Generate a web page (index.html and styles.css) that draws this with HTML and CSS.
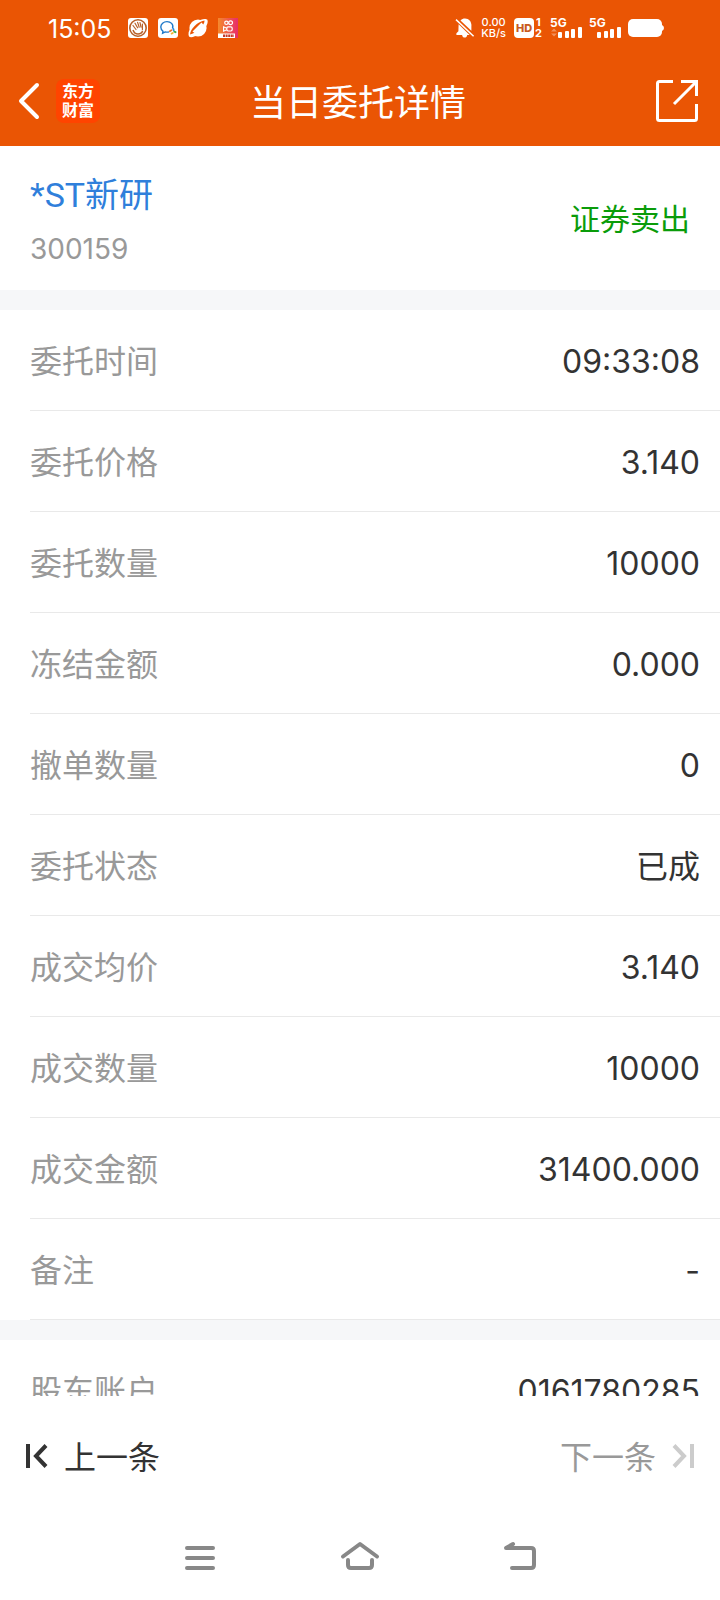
FILE: index.html
```html
<!DOCTYPE html>
<html lang="zh-CN">
<head>
<meta charset="utf-8">
<meta name="viewport" content="width=device-width, initial-scale=1">
<title>当日委托详情</title>
<link rel="stylesheet" href="styles.css">
</head>
<body>
<div class="screen">
  <header class="top">
    <div class="status">
      <div class="status-left">
        <time class="clock">15:05</time>
        <svg class="app-icon" viewBox="0 0 20 20">
          <rect width="20" height="20" rx="3" fill="#fff"/>
          <circle cx="10" cy="10" r="8.2" fill="none" stroke="#b8602a" stroke-width="1.6"/>
          <path d="M5 7.5l3 4M7 5.2l2.6 4.6M9.6 4.4l1.6 4.8M12 4.6l1 4.6M14.4 6v5.5" stroke="#b8602a" stroke-width="1.2" stroke-linecap="round" fill="none"/>
          <path d="M5 12c1 2.800 3 4 5 4s4-1 4.600-3.200" stroke="#b8602a" stroke-width="1.500" fill="none"/>
        </svg>
        <svg class="app-icon" viewBox="0 0 20 20">
          <rect width="20" height="20" rx="3" fill="#fff"/>
          <path d="M14.500 10.500C16 6 12.500 3.600 9 3.600S2.800 6 2.800 9c0 2 .9 3.200 2.200 4.200L4.600 15.200l2.600-1.300c1.200.3 2.500.3 3.800 0" fill="none" stroke="#1f78c8" stroke-width="1.400"/>
          <path d="M11.800 13.200l1.600-1" stroke="#e8752e" stroke-width="1.800" stroke-linecap="round"/>
          <path d="M15.300 10.800l.4 1.400" stroke="#2a8fe0" stroke-width="1.800" stroke-linecap="round"/>
          <path d="M16.200 13.600l1.400.6" stroke="#3fae49" stroke-width="1.800" stroke-linecap="round"/>
          <path d="M13.600 15.600l1.200-.6" stroke="#f2b632" stroke-width="1.800" stroke-linecap="round"/>
        </svg>
        <svg class="app-icon" viewBox="0 0 20 20">
          <circle cx="10" cy="10" r="8.600" fill="#fff"/>
          <path d="M1 18.600C-1 14 3 8 9 3.600 13 .8 18 .2 19.400 1.800 21 6 16 12 11 15.800 7 18.800 3 20 1 18.600z" fill="#fff"/>
          <path d="M2 16.500C2.500 11 9 4 16.500 2.600 17 6.500 9.500 15 2 16.500z" fill="#ea5504"/>
          <path d="M4.500 13.500L13.500 4.500 17 8.500 8.500 16.500z" fill="#fff"/>
        </svg>
        <svg class="app-icon" viewBox="0 0 20 20">
          <defs><linearGradient id="cam" x1="0" x2="1"><stop offset="0" stop-color="#f58a2c"/><stop offset="1" stop-color="#e82c6a"/></linearGradient></defs>
          <rect width="20" height="20" fill="url(#cam)"/>
          <g fill="none" stroke="#fff" stroke-width="1.200"><circle cx="8.400" cy="4.800" r="1.700"/><circle cx="12.600" cy="4.800" r="1.900"/><rect x="8.800" y="8.800" width="5.400" height="4.200" rx="1.400"/><path d="M8.800 10.200L5.600 8.800v4.400l3.200-1.400"/></g>
          <rect y="15.500" width="17" height="4.500" fill="#fff"/>
          <path d="M5 17.800h11" stroke="#c43a28" stroke-width="2.400" stroke-dasharray="2 .6"/>
        </svg>
      </div>
      <div class="status-right">
        <svg class="bell" viewBox="0 0 20 20" fill="#fff">
          <path d="M5.500 2.600C7 .8 8 .4 10 .4c4 0 6.400 3 6.400 7v5.300z"/>
          <path d="M3.600 6.200L14.600 17H12.200c-.3 1.800-1.200 2.600-2.500 2.600S7.400 18.800 7.100 17H1.400v-1.700l2-2z"/>
          <path d="M1 1.600l17.600 16.600" stroke="#fff" stroke-width="1.500"/>
        </svg>
        <div class="speed"><span>0.00</span><span>KB/s</span></div>
        <svg class="hd" viewBox="0 0 30 20">
          <rect width="20" height="20" rx="4" fill="#fff"/>
          <text class="hd-text" x="10" y="14">HD</text>
          <text class="sim-text" x="22" y="8">1</text>
          <text class="sim-text" x="21" y="19">2</text>
        </svg>
        <svg class="signal" viewBox="0 0 33 20" fill="#fff">
          <text class="sig-text" x="0" y="9">5G</text>
          <path d="M1 13.500l3-3 3 3zM1 15.500l3 3 3-3z" opacity=".35"/>
          <rect x="8" y="14" width="4" height="6" rx="1"/><rect x="15" y="13" width="4" height="7" rx="1"/><rect x="21" y="11" width="4" height="9" rx="1"/><rect x="28" y="9" width="4" height="11" rx="1"/>
        </svg>
        <svg class="signal" viewBox="0 0 33 20" fill="#fff">
          <text class="sig-text" x="0" y="9">5G</text>
          <rect x="8" y="14" width="4" height="6" rx="1"/><rect x="15" y="13" width="4" height="7" rx="1"/><rect x="21" y="11" width="4" height="9" rx="1"/><rect x="28" y="9" width="4" height="11" rx="1"/>
        </svg>
        <svg class="battery" viewBox="0 0 36 20" fill="#fff"><rect y="1" width="34" height="18" rx="5"/><path d="M34 7q2 1 2 3t-2 3z"/></svg>
      </div>
    </div>
    <div class="titlebar">
      <div class="title-left">
        <button class="icon-btn" aria-label="返回">
          <svg width="22" height="36" viewBox="0 0 22 36" fill="none" stroke="#fff" stroke-width="4" stroke-linecap="round" stroke-linejoin="round"><path d="M19 2L3 18l16 16"/></svg>
        </button>
        <div class="logo"><span>东方</span><span>财富</span></div>
      </div>
      <h1 class="title">当日委托详情</h1>
      <button class="icon-btn share" aria-label="分享">
        <svg width="42" height="42" viewBox="0 0 42 42" fill="none" stroke="#fff" stroke-width="3"><path d="M17 1.500H3.500q-2 0-2 2v35q0 2 2 2h35q2 0 2-2V24M25 1.500h15.500V16M40 2L18 24"/></svg>
      </button>
    </div>
  </header>

  <main class="content">
    <section class="stock">
      <div>
        <a class="stock-name" href="#">*ST新研</a>
        <div class="stock-code">300159</div>
      </div>
      <div class="side">证券卖出</div>
    </section>
    <dl class="rows">
      <div class="row"><dt>委托时间</dt><dd>09:33:08</dd></div>
      <div class="row"><dt>委托价格</dt><dd>3.140</dd></div>
      <div class="row"><dt>委托数量</dt><dd>10000</dd></div>
      <div class="row"><dt>冻结金额</dt><dd>0.000</dd></div>
      <div class="row"><dt>撤单数量</dt><dd>0</dd></div>
      <div class="row"><dt>委托状态</dt><dd>已成</dd></div>
      <div class="row"><dt>成交均价</dt><dd>3.140</dd></div>
      <div class="row"><dt>成交数量</dt><dd>10000</dd></div>
      <div class="row"><dt>成交金额</dt><dd>31400.000</dd></div>
      <div class="row"><dt>备注</dt><dd>-</dd></div>
    </dl>
    <dl class="rows">
      <div class="row"><dt>股东账户</dt><dd>0161780285</dd></div>
    </dl>
  </main>

  <footer class="pager">
    <button class="page-btn">
      <svg width="24" height="24" viewBox="0 0 24 24" fill="none" stroke="#333" stroke-width="4"><path d="M4 0v24M22 1.500L12 12l10 10.500"/></svg>
      <span class="page-label">上一条</span>
    </button>
    <button class="page-btn page-next" disabled>
      <span class="page-label">下一条</span>
      <svg width="24" height="24" viewBox="0 0 24 24" fill="none" stroke="#ccc" stroke-width="4"><path d="M20 0v24M2 1.500L12 12 2 22.500"/></svg>
    </button>
  </footer>
  <nav class="sysnav">
    <button class="icon-btn" aria-label="菜单"><svg width="40" height="32" viewBox="0 0 40 32" fill="none" stroke="#888" stroke-width="4" stroke-linecap="round"><path d="M7 6h26M7 16h26M7 26h26"/></svg></button>
    <button class="icon-btn" aria-label="主页"><svg width="40" height="32" viewBox="0 0 40 32" fill="none" stroke="#888" stroke-width="4" stroke-linecap="round" stroke-linejoin="round"><path d="M3 14.500L20 2l17 12.500M8 18v5q0 3 3 3h18q3 0 3-3v-5"/></svg></button>
    <button class="icon-btn" aria-label="后退"><svg width="40" height="32" viewBox="0 0 40 32" fill="none" stroke="#888" stroke-width="4" stroke-linecap="round" stroke-linejoin="round"><path d="M12 26h19q3 0 3-3V9q0-3-3-3H6l7-4"/></svg></button>
  </nav>
</div>
</body>
</html>
```
FILE: styles.css
```css
* { box-sizing: border-box; }
body {
  margin: 0;
  background: #fff;
  color: #333;
  font-family: Inter, "Noto Sans CJK SC", sans-serif;
}
button {
  border: 0;
  padding: 0;
  background: none;
  font: inherit;
  color: inherit;
}
svg { display: block; flex: none; overflow: visible; }
.screen { height: 100vh; display: flex; flex-direction: column; }
.top { flex: none; background: #ea5504; color: #fff; }
.status {
  height: 56px;
  padding: 0 56px 0 48px;
  display: flex;
  align-items: center;
  justify-content: space-between;
}
.status-left { display: flex; align-items: center; gap: 10px; }
.clock { padding-top: 2px; font-size: 25px; line-height: 28px; margin-right: 6px; }
.app-icon { width: 20px; height: 20px; }
.status-right { display: flex; align-items: center; gap: 6px; }
.bell { width: 20px; height: 20px; }
.speed {
  display: flex;
  flex-direction: column;
  align-items: center;
  margin-right: 2px;
  font-size: 11px;
  font-weight: 500;
  line-height: 11px;
}
.hd { width: 30px; height: 20px; }
.hd-text { font-size: 11px; font-weight: 800; fill: #c85a20; text-anchor: middle; }
.sim-text { font-size: 11px; font-weight: 700; fill: #fff; }
.sig-text { font-size: 12px; font-weight: 700; }
.signal { width: 33px; height: 20px; }
.battery { width: 36px; height: 20px; }
.titlebar {
  height: 90px;
  padding: 0 22px 0 18px;
  display: grid;
  grid-template-columns: 1fr auto 1fr;
  align-items: center;
}
.title-left { display: flex; align-items: center; gap: 16px; }
.logo {
  width: 44px;
  height: 44px;
  border-radius: 8px;
  background: #ff4400;
  display: flex;
  flex-direction: column;
  align-items: center;
  justify-content: center;
  font-size: 16px;
  font-weight: 700;
  line-height: 19px;
}
.title { margin: 0; padding-top: 4px; font-size: 36px; font-weight: 400; line-height: 48px; }
.share { justify-self: end; }
.content { flex: 1; min-height: 0; overflow: hidden; background: #f6f7f9; }
.stock {
  padding: 24px 30px;
  display: flex;
  align-items: center;
  justify-content: space-between;
  background: #fff;
}
.stock-name {
  display: block;
  font-family: Roboto, "Noto Sans CJK SC", sans-serif;
  font-size: 34px;
  line-height: 50px;
  color: #2f7fdb;
  text-decoration: none;
}
.stock-code { margin-top: 12px; font-size: 28px; line-height: 34px; color: #999; }
.side { padding-top: 2px; font-size: 30px; line-height: 40px; color: #0a9c0a; }
.rows { margin: 0 0 20px; background: #fff; }
.stock + .rows { margin-top: 20px; }
.row {
  height: 101px;
  margin-left: 30px;
  padding: 4px 20px 0 0;
  display: flex;
  align-items: center;
  justify-content: space-between;
  border-bottom: 1px solid #e9e9e9;
  font-size: 32px;
  line-height: 44px;
}
.row dt { color: #999; }
.row dd { margin: 0; }
.pager {
  flex: none;
  height: 120px;
  padding: 0 24px;
  display: flex;
  align-items: center;
  justify-content: space-between;
}
.page-btn {
  display: flex;
  align-items: center;
  gap: 16px;
  font-size: 32px;
  line-height: 44px;
}
.page-label { padding-top: 4px; }
.page-next { color: #999; }
.sysnav {
  flex: none;
  height: 84px;
  display: flex;
  align-items: center;
  justify-content: center;
  gap: 120px;
}
```
